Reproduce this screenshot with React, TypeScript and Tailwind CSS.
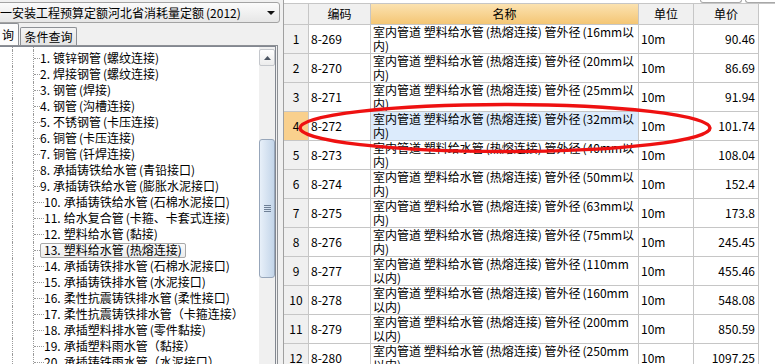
import React from 'react';

const treeItems = [
  '1.镀锌钢管(螺纹连接)',
  '2.焊接钢管(螺纹连接)',
  '3.钢管(焊接)',
  '4.钢管(沟槽连接)',
  '5.不锈钢管(卡压连接)',
  '6.铜管(卡压连接)',
  '7.铜管(钎焊连接)',
  '8.承插铸铁给水管(青铅接口)',
  '9.承插铸铁给水管(膨胀水泥接口)',
  '10.承插铸铁给水管(石棉水泥接口)',
  '11.给水复合管(卡箍、卡套式连接)',
  '12.塑料给水管(黏接)',
  '13.塑料给水管(热熔连接)',
  '14.承插铸铁排水管(石棉水泥接口)',
  '15.承插铸铁排水管(水泥接口)',
  '16.柔性抗震铸铁排水管(柔性接口)',
  '17.柔性抗震铸铁排水管（卡箍连接）',
  '18.承插塑料排水管(零件黏接)',
  '19.承插塑料雨水管（黏接）',
  '20.承插铸铁雨水管（水泥接口）',
];

// code, outer diameter line ending, second line, price
const rows: [string, string, string, string][] = [
  ['8-269', '(16mm以', '内)', '90.46'],
  ['8-270', '(20mm以', '内)', '86.69'],
  ['8-271', '(25mm以', '内)', '91.94'],
  ['8-272', '(32mm以', '内)', '101.74'],
  ['8-273', '(40mm以', '内)', '108.04'],
  ['8-274', '(50mm以', '内)', '152.4'],
  ['8-275', '(63mm以', '内)', '173.8'],
  ['8-276', '(75mm以', '内)', '245.45'],
  ['8-277', '(110mm', '以内)', '455.46'],
  ['8-278', '(160mm', '以内)', '548.08'],
  ['8-279', '(200mm', '以内)', '850.59'],
  ['8-280', '(250mm', '以内)', '1097.25'],
];

const dot = 'border-dotted border-[#9a9a9a]';

// half-width "(" sits in a wider cell in the original bitmap font, so give it some air
function Spaced({ text }: { text: string }) {
  const parts = text.split('(');
  return (
    <>
      {parts.map((p, i) => (
        <React.Fragment key={i}>
          {i > 0 && <span className="ml-[2px]">(</span>}
          {p}
        </React.Fragment>
      ))}
    </>
  );
}

function TreeRow({ n, label }: { n: number; label: string }) {
  const selected = n === 13;
  const wide = n >= 10 && !selected;
  const idx = label.indexOf('.');
  const body = (
    <>
      {label.slice(0, idx + 1)}
      <span className="ml-[3px]">
        <Spaced text={label.slice(idx + 1)} />
      </span>
    </>
  );
  return (
    <div className="flex h-[16px] items-stretch">
      <div className="w-[12px] shrink-0" />
      <div className={`w-[21px] shrink-0 border-l ${dot}`} />
      <div className={`flex shrink-0 items-center border-l ${dot}`}>
        <div className={`${wide ? 'w-[10px]' : 'w-[6px]'} border-t ${dot}`} />
      </div>
      {selected ? (
        <span className="flex h-[15px] items-center self-center whitespace-nowrap rounded-[2px] border border-[#a8a8a8] bg-gradient-to-b from-[#fbfbfb] to-[#ebebeb] px-[3px]">
          {body}
        </span>
      ) : (
        <span className="flex items-center whitespace-nowrap">{body}</span>
      )}
    </div>
  );
}

function Scrollbar() {
  return (
    <div className="flex w-[16px] shrink-0 flex-col bg-[#f0f0f0]">
      <div className="mt-[2px] flex h-[17px] items-center justify-center rounded-[2px] border border-[#c4c7cc] bg-gradient-to-b from-[#ffffff] to-[#ececec]">
        <svg width="7" height="4" viewBox="0 0 7 4">
          <path d="M3.5 0 L7 4 L0 4 Z" fill="#4d5663" />
        </svg>
      </div>
      <div className="h-[73px]" />
      <div className="flex h-[139px] items-center justify-center rounded-[3px] border border-[#97a6ba] bg-gradient-to-r from-[#e8f0f9] to-[#c3d5e9]">
        <div className="flex w-[7px] flex-col gap-[1px]">
          <div className="h-[1px] bg-[#6f8096]" />
          <div className="h-[1px] bg-[#6f8096]" />
          <div className="h-[1px] bg-[#6f8096]" />
          <div className="h-[1px] bg-[#6f8096]" />
        </div>
      </div>
      <div className="flex-1" />
    </div>
  );
}

function LeftPanel() {
  return (
    <div className="flex w-[283px] shrink-0 flex-col bg-[#f0f0f0]">
      {/* combobox */}
      <div className="h-[23px] pt-[2px]">
        <div className="ml-[-3px] flex h-[21px] w-[283px] items-center justify-between rounded-[3px] border border-[#a3a3a3] bg-gradient-to-b from-[#fbfbfb] to-[#e6e6e6] pl-[2px] pr-[4px]">
          <span className="whitespace-nowrap">
            一安装工程预算定额河北省消耗量定额<Spaced text="(2012)" />
          </span>
          <svg width="8" height="4" viewBox="0 0 8 4">
            <path d="M0 0 L8 0 L4 4 Z" fill="#111" />
          </svg>
        </div>
      </div>
      {/* tabs */}
      <div className="flex h-[23px] items-end">
        <div className="ml-[-14px] flex h-[22px] w-[33px] items-center justify-end rounded-t-[2px] border border-b-0 border-[#8d9095] bg-[#fcfcfc] pr-[4px]">
          询
        </div>
        <div className="ml-[1px] flex h-[18px] w-[57px] items-center justify-center rounded-t-[2px] border border-b-0 border-[#8d9095] bg-gradient-to-b from-[#f4f4f4] to-[#e4e4e4]">
          条件查询
        </div>
      </div>
      {/* tab page */}
      <div className="flex w-[278px] flex-1 flex-col border-r border-t border-[#8d9095]">
        <div className="flex w-[276px] flex-1 border-r border-t border-[#828790] bg-white">
          <div className="flex-1">
            <div className="flex h-[3px]">
              <div className="w-[12px]" />
              <div className={`w-[21px] border-l ${dot}`} />
              <div className={`border-l ${dot}`} />
            </div>
            {treeItems.map((t, i) => (
              <TreeRow key={t} n={i + 1} label={t} />
            ))}
          </div>
          <Scrollbar />
        </div>
      </div>
    </div>
  );
}

const cell = 'border-b border-r border-[#c6c6c6]';

function Grid() {
  return (
    <div className="flex flex-1 flex-col border-l border-[#a0a0a0] bg-white">
      <div className="flex h-[4px] justify-end">
        <div className="h-[3px] w-[42px] rounded-b-[3px] border-x border-b border-[#a8a8a8]" />
        <div className="ml-[3px] h-[3px] w-[30px] rounded-bl-[3px] border-b border-l border-[#a8a8a8]" />
      </div>
      <div className="grid grid-cols-[25px_62px_268px_55px_65px] border-t border-[#c6c6c6]">
        <div className={`${cell} h-[21px] bg-[#f0f0f0]`} />
        <div className={`${cell} flex items-center justify-center bg-[#f0f0f0]`}>编码</div>
        <div className={`${cell} flex items-center justify-center bg-gradient-to-b from-[#fbe2b0] to-[#f4c674]`}>名称</div>
        <div className={`${cell} flex items-center justify-center bg-[#f0f0f0]`}>单位</div>
        <div className={`${cell} flex items-center justify-center bg-[#f0f0f0]`}>单价</div>
        {rows.map(([code, size, tail, price], i) => {
          const sel = i === 3;
          return (
            <React.Fragment key={code}>
              <div className={`${cell} flex h-[29px] items-center justify-center ${sel ? 'bg-[#f9d08d]' : 'bg-[#f0f0f0]'}`}>{i + 1}</div>
              <div className={`${cell} flex items-center pl-[2px]`}>{code}</div>
              <div className={`${cell} overflow-hidden whitespace-pre pl-[2px] leading-[14px] ${sel ? 'bg-[#dcebfc]' : ''}`}>
                <Spaced text={`室内管道 塑料给水管(热熔连接) 管外径${size}`} />
                <br />
                {tail}
              </div>
              <div className={`${cell} flex items-center pl-[2px]`}>10m</div>
              <div className={`${cell} flex items-center justify-end pr-[3px]`}>{price}</div>
            </React.Fragment>
          );
        })}
      </div>
    </div>
  );
}

export default function App() {
  return (
    <div className="relative flex h-[364px] w-[775px] overflow-hidden bg-[#f0f0f0] font-['Noto_Sans_CJK_SC',sans-serif] text-[12px] leading-none text-black">
      <LeftPanel />
      <Grid />
      {/* red hand-drawn annotation */}
      <svg className="pointer-events-none absolute left-0 top-0" width="775" height="364">
        <ellipse cx="505" cy="128" rx="205" ry="23.5" fill="none" stroke="#ee1111" strokeWidth="3.5" />
      </svg>
    </div>
  );
}
